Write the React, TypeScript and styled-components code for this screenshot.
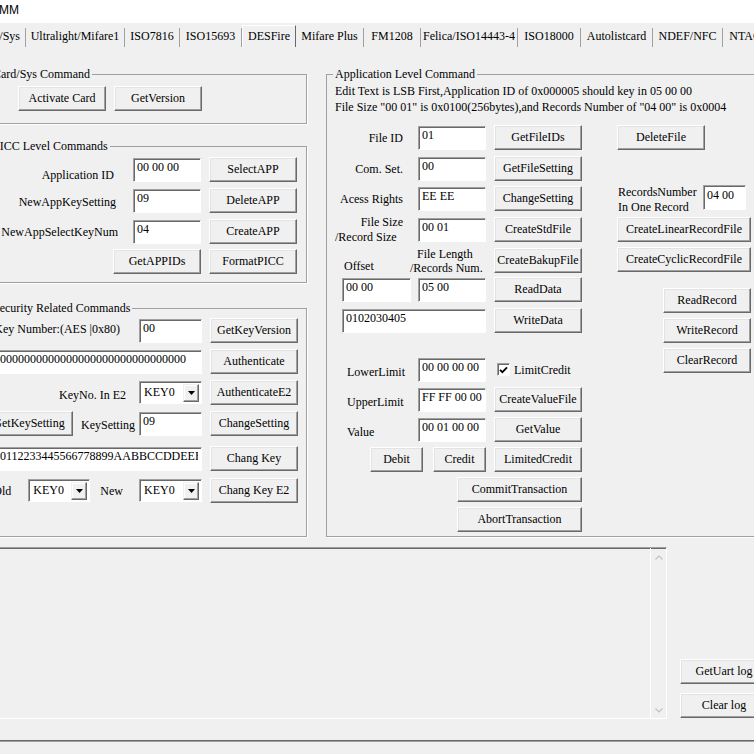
import React from 'react';
import styled, { createGlobalStyle, css } from 'styled-components';

const FONT = `"Liberation Serif", "Times New Roman", serif`;

const GlobalStyle = createGlobalStyle`
  html, body { margin: 0; padding: 0; overflow: hidden; background: #f0f0f0; }
  body { font-family: ${FONT}; font-size: 12px; color: #000; }
  * { box-sizing: border-box; }
`;

const raised = css`
  border: 1px solid;
  border-color: #fff #696969 #696969 #fff;
  box-shadow: inset -1px -1px 0 #a0a0a0, inset 1px 1px 0 #e3e3e3;
`;

const sunken = css`
  border: 1px solid;
  border-color: #a0a0a0 #fff #fff #a0a0a0;
  box-shadow: inset 1px 1px 0 #696969;
`;

const Window = styled.div`
  width: 754px;
  height: 754px;
  display: flex;
  flex-direction: column;
  overflow: hidden;
  background: #f0f0f0;
`;

const TitleBar = styled.div`
  flex: none;
  height: 23px;
  background: #fff;
  font-family: "Liberation Sans", Arial, sans-serif;
  font-size: 12px;
  line-height: 20px;
  text-indent: -1px;
`;

const TabStrip = styled.div`
  flex: none;
  height: 24px;
  display: flex;
  align-items: flex-end;
  margin-left: -29px;
`;

const Tab = styled.div<{ $w: number; $active?: boolean }>`
  flex: none;
  width: ${p => p.$w}px;
  height: ${p => (p.$active ? 22 : 19)}px;
  line-height: ${p => (p.$active ? 20 : 17)}px;
  text-align: center;
  white-space: nowrap;
  overflow: hidden;
  border-right: 1px solid #a0a0a0;
  ${p =>
    p.$active &&
    css`
      border-top: 1px solid #fff;
      border-left: 1px solid #fff;
      border-right-color: #696969;
    `}
`;

const TabPage = styled.div`
  flex: none;
  height: 490px;
  display: flex;
  margin-left: -18px;
`;

const LeftCol = styled.div`
  flex: none;
  width: 325px;
  display: flex;
  flex-direction: column;
  padding-top: 20px;
`;

const Group = styled.fieldset<{ $mt?: number; $fill?: boolean; $pad: string }>`
  margin: ${p => p.$mt ?? 0}px 0 0 0;
  padding: ${p => p.$pad};
  min-width: 0;
  border: 1px solid #a0a0a0;
  box-shadow: 1px 1px 0 #fff;
  display: flex;
  flex-direction: column;
  ${p => p.$fill && 'flex: 1;'}
`;

const AppGroup = styled(Group)`
  flex: none;
  width: 460px;
  margin: 20px 0 0 19px;
`;

const Legend = styled.legend<{ $ml: number }>`
  margin-left: ${p => p.$ml}px;
  padding: 0 2px;
  line-height: 14px;
  white-space: nowrap;
`;

const Row = styled.div<{ $mt?: number; $start?: boolean; $h?: number; $top?: boolean; $pl?: number }>`
  display: flex;
  flex: none;
  gap: 8px;
  height: ${p => p.$h ?? 25}px;
  margin-top: ${p => p.$mt ?? 0}px;
  padding-left: ${p => p.$pl ?? 0}px;
  align-items: ${p => (p.$top ? 'flex-start' : 'center')};
  justify-content: ${p => (p.$start ? 'flex-start' : 'flex-end')};
`;

const Label = styled.span<{ $w?: number; $right?: boolean; $mr?: number; $ml?: number; $dy?: number; $end?: boolean }>`
  flex: none;
  width: ${p => (p.$w ? `${p.$w}px` : 'auto')};
  text-align: ${p => (p.$right ? 'right' : 'left')};
  margin: ${p => (p.$dy ?? 0) * 2}px ${p => p.$mr ?? 0}px 0 ${p => p.$ml ?? 0}px;
  line-height: 14px;
  white-space: nowrap;
  ${p => p.$end && 'align-self: flex-end;'}
`;

const Line = styled.span<{ $right?: boolean; $indent?: number; $lh?: number }>`
  display: block;
  line-height: ${p => p.$lh ?? 15}px;
  text-align: ${p => (p.$right ? 'right' : 'left')};
  padding-left: ${p => p.$indent ?? 0}px;
`;

const Field = styled.input<{ $w: number; $mr?: number; $h?: number }>`
  ${sunken}
  flex: none;
  width: ${p => p.$w}px;
  height: ${p => p.$h ?? 24}px;
  margin: 0 ${p => p.$mr ?? 0}px 0 0;
  padding: 0 3px 5px 3px;
  background: #fff;
  font: 12px ${FONT};
  color: #000;
  outline: none;
`;

const Btn = styled.button<{ $w?: number; $mr?: number; $mt?: number; $end?: boolean }>`
  ${raised}
  flex: none;
  width: ${p => p.$w ?? 88}px;
  height: 25px;
  padding: 0;
  margin: ${p => p.$mt ?? 0}px ${p => p.$mr ?? 0}px 0 0;
  font: 12px ${FONT};
  color: #000;
  background: #f0f0f0;
  white-space: nowrap;
  ${p => p.$end && 'align-self: flex-end;'}
`;

const Combo = styled.div<{ $w: number }>`
  ${sunken}
  flex: none;
  width: ${p => p.$w}px;
  height: 23px;
  background: #fff;
  display: flex;
  padding: 2px 2px 1px 4px;
`;

const ComboValue = styled.span`
  flex: 1;
  line-height: 17px;
`;

const ComboArrow = styled.span`
  flex: none;
  width: 16px;
  background: #f0f0f0;
  border: 1px solid;
  border-color: #f0f0f0 #696969 #696969 #f0f0f0;
  box-shadow: inset -1px -1px 0 #a0a0a0, inset 1px 1px 0 #fff;
  display: flex;
  align-items: center;
  justify-content: center;
`;

const CheckItem = styled.label`
  flex: none;
  width: 88px;
  display: flex;
  align-items: center;
  gap: 4px;
  padding-left: 3px;
  line-height: 14px;
`;

const CheckBox = styled.span`
  ${sunken}
  width: 13px;
  height: 13px;
  background: #fff;
  display: flex;
  align-items: center;
  justify-content: center;
`;

const Notes = styled.div`
  padding: 2px 0 0 8px;
  line-height: 16px;
  white-space: nowrap;
`;

const AppBody = styled.div`
  display: flex;
  margin-top: 10px;
  padding-left: 8px;
`;

const MainForm = styled.div`
  flex: none;
  width: 247px;
  display: flex;
  flex-direction: column;
`;

const RightCol = styled.div`
  flex: none;
  width: 134px;
  margin-left: 35px;
  display: flex;
  flex-direction: column;
  align-items: flex-start;
`;

const LogSection = styled.div`
  flex: none;
  height: 172px;
  margin: 10px 0 0 -10px;
  display: flex;
`;

const LogBox = styled.div`
  ${sunken}
  flex: none;
  width: 677px;
  display: flex;
  background: #f0f0f0;
`;

const LogText = styled.div`
  flex: 1;
`;

const ScrollBar = styled.div`
  flex: none;
  width: 16px;
  border-left: 1px solid #fff;
  display: flex;
  flex-direction: column;
  justify-content: space-between;
  align-items: center;
  padding: 7px 0 5px;
`;

const LogButtons = styled.div`
  flex: none;
  margin-left: 13px;
  padding-bottom: 1px;
  display: flex;
  flex-direction: column;
  justify-content: flex-end;
  gap: 9px;
`;

const StatusBar = styled.div`
  flex: 1;
  margin-top: 21px;
  border-top: 1px solid #696969;
  box-shadow: inset 0 1px 0 #a0a0a0;
`;

const tabs: [string, number][] = [
  ['Card/Sys', 55],
  ['Ultralight/Mifare1', 99],
  ['ISO7816', 55],
  ['ISO15693', 62],
  ['DESFire', 54],
  ['Mifare Plus', 68],
  ['FM1208', 57],
  ['Felica/ISO14443-4', 97],
  ['ISO18000', 63],
  ['Autolistcard', 72],
  ['NDEF/NFC', 70],
  ['NTAG213', 64],
];

const DropArrow = () => (
  <svg width="7" height="4" viewBox="0 0 7 4">
    <path d="M0 0 H7 L3.5 4 Z" fill="#000" />
  </svg>
);

const Chevron = ({ up }: { up?: boolean }) => (
  <svg width="8" height="5" viewBox="0 0 8 5">
    <path d={up ? 'M0.5 4.5 L4 1 L7.5 4.5' : 'M0.5 0.5 L4 4 L7.5 0.5'} fill="none" stroke="#c2c2c2" strokeWidth="1.2" />
  </svg>
);

const KeyCombo = ({ w }: { w: number }) => (
  <Combo $w={w}>
    <ComboValue>KEY0</ComboValue>
    <ComboArrow>
      <DropArrow />
    </ComboArrow>
  </Combo>
);

const App = () => {
  return (
    <Window>
      <GlobalStyle />
      <TitleBar>MM</TitleBar>
      <TabStrip>
        {tabs.map(([name, w]) => (
          <Tab key={name} $w={w} $active={name === 'DESFire'}>
            {name}
          </Tab>
        ))}
      </TabStrip>

      <TabPage>
        <LeftCol>
          <Group $pad="5px 0 12px 0">
            <Legend $ml={8}>Card/Sys Command</Legend>
            <Row $start $pl={35}>
              <Btn>Activate Card</Btn>
              <Btn>GetVersion</Btn>
            </Row>
          </Group>

          <Group $mt={15} $pad="4px 9px 8px 0">
            <Legend $ml={8}>PICC Level Commands</Legend>
            <Row>
              <Label $mr={11} $dy={5}>Application ID</Label>
              <Field $w={68} defaultValue="00 00 00" />
              <Btn>SelectAPP</Btn>
            </Row>
            <Row $mt={6}>
              <Label $mr={9} $dy={1}>NewAppKeySetting</Label>
              <Field $w={68} defaultValue="09" />
              <Btn>DeleteAPP</Btn>
            </Row>
            <Row $mt={6}>
              <Label $mr={7}>NewAppSelectKeyNum</Label>
              <Field $w={68} defaultValue="04" />
              <Btn>CreateAPP</Btn>
            </Row>
            <Row $mt={5}>
              <Btn>GetAPPIDs</Btn>
              <Btn>FormatPICC</Btn>
            </Row>
          </Group>

          <Group $mt={18} $fill $pad="3px 8px 0 0">
            <Legend $ml={8}>Security Related Commands</Legend>
            <Row>
              <Label $mr={11} $dy={-2}>Key Number:(AES |0x80)</Label>
              <Field $w={63} defaultValue="00" />
              <Btn>GetKeyVersion</Btn>
            </Row>
            <Row $mt={6}>
              <Field $w={212} defaultValue="00000000000000000000000000000000" />
              <Btn>Authenticate</Btn>
            </Row>
            <Row $mt={6}>
              <Label $mr={5} $dy={2}>KeyNo. In E2</Label>
              <KeyCombo w={63} />
              <Btn>AuthenticateE2</Btn>
            </Row>
            <Row $mt={6}>
              <Btn>GetKeySetting</Btn>
              <Label $mr={-4} $dy={1}>KeySetting</Label>
              <Field $w={63} defaultValue="09" />
              <Btn>ChangeSetting</Btn>
            </Row>
            <Row $mt={10}>
              <Field $w={212} defaultValue="00112233445566778899AABBCCDDEEFF" />
              <Btn>Chang Key</Btn>
            </Row>
            <Row $mt={7}>
              <Label $mr={9}>Old</Label>
              <KeyCombo w={62} />
              <Label $ml={2} $mr={8}>New</Label>
              <KeyCombo w={63} />
              <Btn>Chang Key E2</Btn>
            </Row>
          </Group>
        </LeftCol>

        <AppGroup $pad="0">
          <Legend $ml={6}>Application Level Command</Legend>
          <Notes>
            Edit Text is LSB First,Application ID of 0x000005 should key in 05 00 00
            <br />
            File Size "00 01" is 0x0100(256bytes),and Records Number of "04 00" is 0x0004
          </Notes>
          <AppBody>
            <MainForm>
              <Row>
                <Label $w={80} $right $mr={7}>File ID</Label>
                <Field $w={68} defaultValue="01" />
                <Btn>GetFileIDs</Btn>
              </Row>
              <Row $mt={6}>
                <Label $w={80} $right $mr={7}>Com. Set.</Label>
                <Field $w={68} defaultValue="00" />
                <Btn>GetFileSetting</Btn>
              </Row>
              <Row $mt={5}>
                <Label $w={80} $right $mr={7}>Acess Rights</Label>
                <Field $w={68} defaultValue="EE EE" />
                <Btn>ChangeSetting</Btn>
              </Row>
              <Row $mt={6}>
                <Label $w={68} $mr={7}>
                  <Line $right>File Size</Line>
                  <Line>/Record Size</Line>
                </Label>
                <Field $w={68} defaultValue="00 01" />
                <Btn>CreateStdFile</Btn>
              </Row>
              <Row $mt={6}>
                <Label $w={68} $mr={-8} $end>
                  <Line $indent={2} $lh={14}>Offset</Line>
                </Label>
                <Label $w={76}>
                  <Line $indent={7} $lh={14}>File Length</Line>
                  <Line $lh={14}>/Records Num.</Line>
                </Label>
                <Btn>CreateBakupFile</Btn>
              </Row>
              <Row $mt={4}>
                <Field $w={69} $mr={-1} defaultValue="00 00" />
                <Field $w={68} defaultValue="05 00" />
                <Btn>ReadData</Btn>
              </Row>
              <Row $mt={6}>
                <Field $w={144} defaultValue="0102030405" />
                <Btn>WriteData</Btn>
              </Row>

              <Row $mt={24}>
                <Label $w={56} $mr={7} $dy={2}>LowerLimit</Label>
                <Field $w={68} defaultValue="00 00 00 00" />
                <CheckItem>
                  <CheckBox>
                    <svg width="9" height="8" viewBox="0 0 9 8">
                      <path d="M1 3.8 L3.4 6.2 L8 1.4" fill="none" stroke="#000" strokeWidth="1.8" />
                    </svg>
                  </CheckBox>
                  LimitCredit
                </CheckItem>
              </Row>
              <Row $mt={5}>
                <Label $w={56} $mr={7} $dy={2}>UpperLimit</Label>
                <Field $w={68} defaultValue="FF FF 00 00" />
                <Btn>CreateValueFile</Btn>
              </Row>
              <Row $mt={5}>
                <Label $w={56} $mr={7} $dy={2}>Value</Label>
                <Field $w={68} defaultValue="00 01 00 00" />
                <Btn>GetValue</Btn>
              </Row>
              <Row $mt={5}>
                <Btn $w={53} $mr={2}>Debit</Btn>
                <Btn $w={53}>Credit</Btn>
                <Btn>LimitedCredit</Btn>
              </Row>
              <Row $mt={5}>
                <Btn $w={125}>CommitTransaction</Btn>
              </Row>
              <Row $mt={5}>
                <Btn $w={125}>AbortTransaction</Btn>
              </Row>
            </MainForm>

            <RightCol>
              <Btn>DeleteFile</Btn>
              <Row $mt={35} $h={30} $top $start>
                <Label $w={86} $ml={1} $mr={-9}>
                  <Line>RecordsNumber</Line>
                  <Line>In One Record</Line>
                </Label>
                <Field $w={43} $h={25} defaultValue="04 00" />
              </Row>
              <Btn $w={134} $mt={2}>CreateLinearRecordFile</Btn>
              <Btn $w={134} $mt={5}>CreateCyclicRecordFile</Btn>
              <Btn $end $mt={16}>ReadRecord</Btn>
              <Btn $end $mt={5}>WriteRecord</Btn>
              <Btn $end $mt={5}>ClearRecord</Btn>
            </RightCol>
          </AppBody>
        </AppGroup>
      </TabPage>

      <LogSection>
        <LogBox>
          <LogText />
          <ScrollBar>
            <Chevron up />
            <Chevron />
          </ScrollBar>
        </LogBox>
        <LogButtons>
          <Btn>GetUart log</Btn>
          <Btn>Clear log</Btn>
        </LogButtons>
      </LogSection>

      <StatusBar />
    </Window>
  );
};

export default App;
